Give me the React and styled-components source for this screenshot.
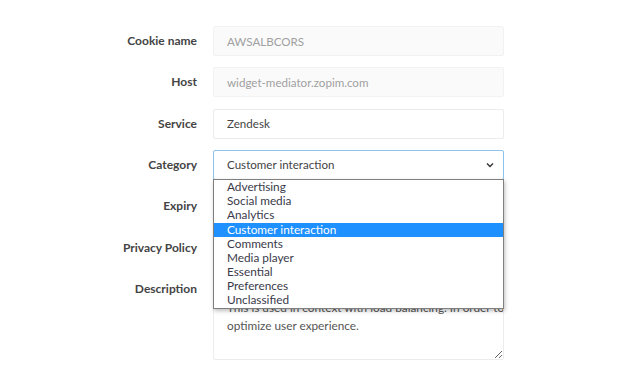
import React from 'react';
import styled, { createGlobalStyle } from 'styled-components';

const GlobalStyle = createGlobalStyle`
  body {
    margin: 0;
    background: #ffffff;
    font-family: Lato, "Open Sans", sans-serif;
  }
`;

const Page = styled.div`
  width: 641px;
  height: 384px;
  padding-top: 26px;
  box-sizing: border-box;
  overflow: hidden;
`;

const Form = styled.form`
  display: grid;
  grid-template-columns: 197px 291px;
  column-gap: 16px;
  row-gap: 11.33px;
  position: relative;
`;

const Label = styled.label`
  text-align: right;
  font-size: 12px;
  font-weight: 700;
  color: #444;
  line-height: 29px;
  align-self: start;
`;

const Input = styled.input`
  height: 30px;
  box-sizing: border-box;
  border: 1px solid ${(p) => (p.disabled ? '#f2f2f2' : '#ececec')};
  border-radius: 2px;
  background: ${(p) => (p.disabled ? '#fafafa' : '#fff')};
  color: ${(p) => (p.disabled ? '#a0a0a0' : '#444')};
  font-family: inherit;
  font-size: 11.6px;
  padding: 0 13px;
  outline: none;
`;

const SelectWrap = styled.div`
  position: relative;
`;

const Select = styled.div`
  height: 30px;
  box-sizing: border-box;
  border: 1px solid #8ec3ee;
  border-radius: 2px;
  background: #fff;
  color: #444;
  font-size: 11.6px;
  padding: 0 9px 0 13px;
  display: flex;
  align-items: center;
  justify-content: space-between;
`;

const Dropdown = styled.ul`
  position: absolute;
  top: 29px;
  left: 0;
  width: 291px;
  box-sizing: border-box;
  margin: 0;
  padding: 0;
  list-style: none;
  background: #fff;
  border: 1px solid #7f7f7f;
  box-shadow: 1px 2px 4px rgba(0, 0, 0, 0.25);
  z-index: 2;
`;

const Option = styled.li`
  height: 14.2px;
  line-height: 14px;
  font-size: 11.8px;
  padding-left: 13px;
  color: ${(p) => (p.active ? '#fff' : '#3a3a4a')};
  background: ${(p) => (p.active ? '#1e90ff' : 'transparent')};
`;

const TextArea = styled.textarea`
  height: 86px;
  box-sizing: border-box;
  border: 1px solid #ececec;
  border-radius: 2px;
  font-family: inherit;
  font-size: 11.8px;
  line-height: 18px;
  color: #555;
  padding: 6px 2px 6px 13px;
  resize: vertical;
  outline: none;
  overflow: hidden;
  white-space: pre;
`;

const Chevron = () => (
  <svg width="8" height="6" viewBox="0 0 8 6">
    <path d="M1 1.5 L4 4.5 L7 1.5" fill="none" stroke="#333" strokeWidth="1.4" />
  </svg>
);

const categories = [
  'Advertising',
  'Social media',
  'Analytics',
  'Customer interaction',
  'Comments',
  'Media player',
  'Essential',
  'Preferences',
  'Unclassified',
];

export default function App() {
  return (
    <Page>
      <GlobalStyle />
      <Form>
        <Label>Cookie name</Label>
        <Input disabled value="AWSALBCORS" readOnly />

        <Label>Host</Label>
        <Input disabled value="widget-mediator.zopim.com" readOnly />

        <Label>Service</Label>
        <Input value="Zendesk" readOnly />

        <Label>Category</Label>
        <SelectWrap>
          <Select>
            <span>Customer interaction</span>
            <Chevron />
          </Select>
          <Dropdown>
            {categories.map((c) => (
              <Option key={c} active={c === 'Customer interaction'}>
                {c}
              </Option>
            ))}
          </Dropdown>
        </SelectWrap>

        <Label>Expiry</Label>
        <Input value="7 days" readOnly />

        <Label>Privacy Policy</Label>
        <Input value="" readOnly />

        <Label>Description</Label>
        <TextArea
          readOnly
          wrap="off"
          value={'This cookie is set by Amazon Web Services.\nThis is used in context with load balancing. In order to\noptimize user experience.'}
        />
      </Form>
    </Page>
  );
}
